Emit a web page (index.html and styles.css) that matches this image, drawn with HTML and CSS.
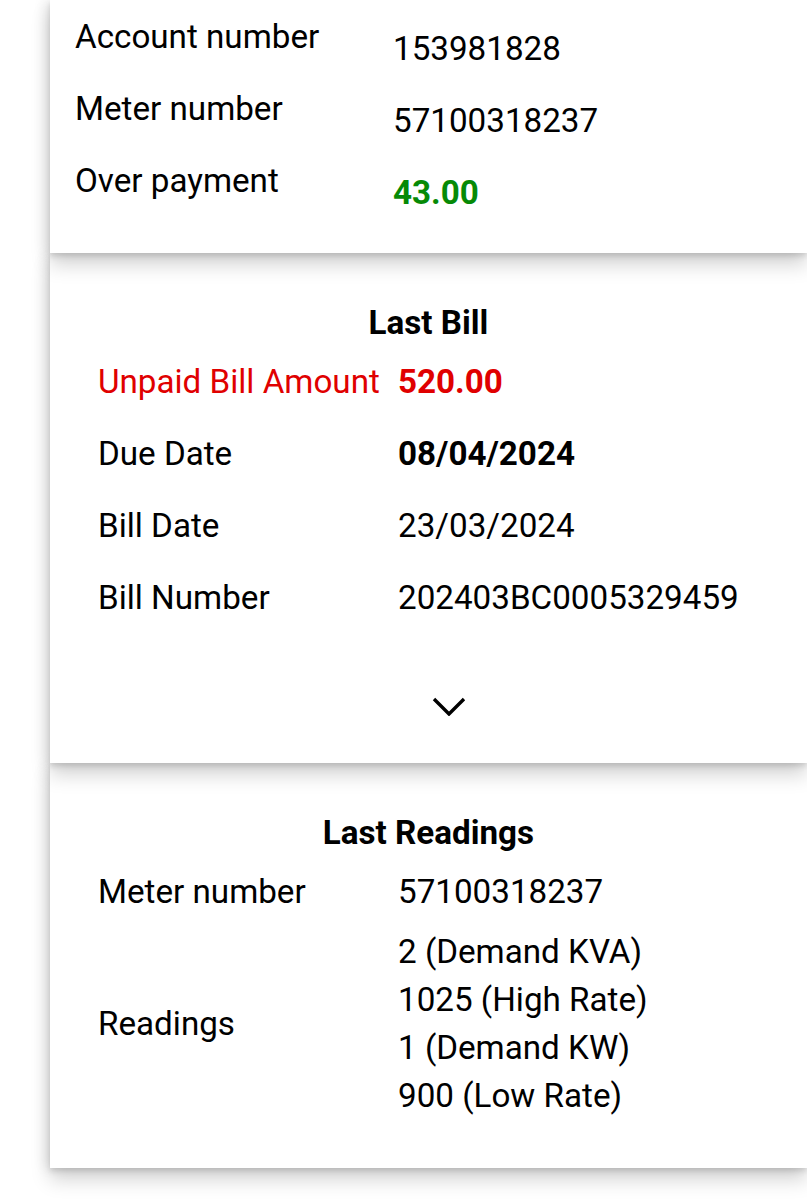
FILE: index.html
```html
<!DOCTYPE html>
<html lang="en">
<head>
  <meta charset="UTF-8">
  <meta name="viewport" content="width=device-width, initial-scale=1.0">
  <title>Account</title>
  <link rel="stylesheet" href="styles.css">
</head>
<body>

<div class="page">
  <section class="card card-account">
    <div class="info-grid">
      <div class="label">Account number</div>
      <div class="value">153981828</div>
      <div class="label">Meter number</div>
      <div class="value">57100318237</div>
      <div class="label">Over payment</div>
      <div class="value strong green">43.00</div>
    </div>
  </section>

  <section class="card card-bill">
    <h2 class="card-title">Last Bill</h2>
    <div class="info-grid">
      <div class="label red">Unpaid Bill Amount</div>
      <div class="value strong red">520.00</div>
      <div class="label">Due Date</div>
      <div class="value strong">08/04/2024</div>
      <div class="label">Bill Date</div>
      <div class="value">23/03/2024</div>
      <div class="label">Bill Number</div>
      <div class="value">202403BC0005329459</div>
    </div>
    <div class="expand">
      <svg width="34" height="19" viewBox="0 0 34 19">
        <polyline points="2,2 17,17 32,2" fill="none" stroke="#000" stroke-width="3.4"/>
      </svg>
    </div>
  </section>

  <section class="card card-readings">
    <h2 class="card-title">Last Readings</h2>
    <div class="info-grid">
      <div class="label">Meter number</div>
      <div class="value">57100318237</div>
      <div class="label">Readings</div>
      <div class="value">
        <div>2 (Demand KVA)</div>
        <div>1025 (High Rate)</div>
        <div>1 (Demand KW)</div>
        <div>900 (Low Rate)</div>
      </div>
    </div>
  </section>
</div>

</body>
</html>
```
FILE: styles.css
```css
body {
  margin: 0;
  padding: 0;
  background-color: #ffffff;
  font-family: Roboto, "Liberation Sans", sans-serif;
  font-size: 33.2px;
  line-height: 48px;
  color: #000;
}

.page {
  padding-left: 50px;
  overflow: hidden;
  padding-bottom: 40px;
}

.card {
  position: relative;
  width: 757px;
  background-color: #ffffff;
  box-shadow: 0 12px 18px rgba(0, 0, 0, 0.17), 0 3px 5px rgba(0, 0, 0, 0.1), -5px 0 12px rgba(0, 0, 0, 0.09);
}

.card-account {
  z-index: 3;
  padding: 13px 0 36px 0;
}

.card-bill {
  z-index: 2;
  padding: 46px 0 33px 0;
}

.card-readings {
  z-index: 1;
  padding: 46px 0 48px 0;
}

.card-title {
  margin: 0;
  font-size: 33.2px;
  font-weight: 700;
  line-height: 48px;
  text-align: center;
}

.info-grid {
  display: grid;
  grid-template-columns: 300px 1fr;
  row-gap: 24px;
  padding-left: 48px;
  margin-top: 11px;
}

.card-account .info-grid {
  grid-template-columns: 318px 1fr;
  row-gap: 12px;
  padding-left: 25px;
  margin-top: 0;
}

.card-account .value {
  padding-top: 12px;
}

.card-readings .info-grid {
  row-gap: 12px;
  align-items: center;
}

.strong {
  font-weight: 700;
}

.red {
  color: #e00000;
}

.green {
  color: #068a06;
}

.expand {
  display: flex;
  justify-content: center;
  align-items: center;
  height: 48px;
  margin-top: 60px;
  padding-left: 41px;
}
```
